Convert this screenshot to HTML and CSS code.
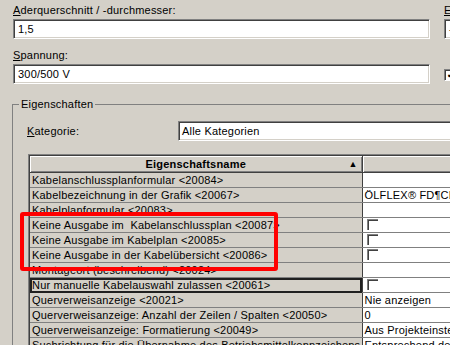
FILE: index.html
```html
<!DOCTYPE html>
<html lang="de">
<head>
    <meta charset="UTF-8">
    <title>Eigenschaften</title>
    <link rel="stylesheet" href="styles.css">
</head>
<body>
    <div class="top">
        <div class="fields">
            <label class="lbl"><u>A</u>derquerschnitt / -durchmesser:</label>
            <div class="edit">1,5</div>
            <label class="lbl second"><u>S</u>pannung:</label>
            <div class="edit">300/500 V</div>
        </div>
        <div class="side">
            <label class="lbl"><u>E</u></label>
            <div class="edit combo">-</div>
            <span class="check side-check">&#10004;</span>
        </div>
    </div>

    <fieldset class="group">
        <legend>Eigenschaften</legend>
        <div class="cat-row">
            <label class="cat-label"><u>K</u>ategorie:</label>
            <div class="edit select">Alle Kategorien</div>
        </div>
        <div class="grid-outer">
            <div class="grid-inner">
                <table class="props">
                    <colgroup><col class="c-name"><col class="c-value"></colgroup>
                    <thead>
                        <tr>
                            <th class="h-name">Eigenschaftsname<span class="sort">&#9650;</span></th>
                            <th class="h-value"></th>
                        </tr>
                    </thead>
                    <tbody>
                        <tr><td>Kabelanschlussplanformular &lt;20084&gt;</td><td></td></tr>
                        <tr><td>Kabelbezeichnung in der Grafik &lt;20067&gt;</td><td>ÖLFLEX® FD¶CLASSIC 810</td></tr>
                        <tr><td>Kabelplanformular &lt;20083&gt;</td><td></td></tr>
                        <tr><td>Keine Ausgabe im &nbsp;Kabelanschlussplan &lt;20087&gt;</td><td><span class="check"></span></td></tr>
                        <tr><td>Keine Ausgabe im Kabelplan &lt;20085&gt;</td><td><span class="check"></span></td></tr>
                        <tr><td>Keine Ausgabe in der Kabelübersicht &lt;20086&gt;</td><td><span class="check"></span></td></tr>
                        <tr><td>Montageort (beschreibend) &lt;20024&gt;</td><td></td></tr>
                        <tr class="selected"><td>Nur manuelle Kabelauswahl zulassen &lt;20061&gt;</td><td><span class="check"></span></td></tr>
                        <tr><td>Querverweisanzeige &lt;20021&gt;</td><td>Nie anzeigen</td></tr>
                        <tr><td>Querverweisanzeige: Anzahl der Zeilen / Spalten &lt;20050&gt;</td><td>0</td></tr>
                        <tr><td>Querverweisanzeige: Formatierung &lt;20049&gt;</td><td>Aus Projekteinstellungen</td></tr>
                        <tr><td>Suchrichtung für die Übernahme des Betriebsmittelkennzeichens</td><td>Entsprechend der Einstellung</td></tr>
                    </tbody>
                </table>
            </div>
        </div>
    </fieldset>

    <div class="mark"></div>
</body>
</html>
```

FILE: styles.css
```css
body {
    margin: 0;
    width: 450px;
    height: 345px;
    overflow: hidden;
    position: relative;
    background-color: #d4d0c8;
    font-family: "Liberation Sans", Arial, sans-serif;
    font-size: 11px;
    letter-spacing: 0.2px;
    color: #000;
}
.top {
    display: flex;
    gap: 14px;
    padding: 4px 0 0 13px;
}
.fields {
    width: 417px;
    flex: none;
}
.side {
    width: 40px;
    flex: none;
}
.lbl {
    display: block;
    height: 13px;
    line-height: 13px;
    margin-bottom: 2px;
}
.lbl.second {
    margin-top: 10px;
}
.edit {
    height: 20px;
    box-sizing: border-box;
    border: 1px solid;
    border-color: #808080 #fff #fff #808080;
    box-shadow: inset 1px 1px #404040, inset -1px -1px #d4d0c8;
    background-color: #fff;
    padding: 0 4px;
    line-height: 18px;
    white-space: nowrap;
    overflow: hidden;
}
.check {
    display: inline-block;
    width: 12px;
    height: 12px;
    box-sizing: border-box;
    border: 1px solid;
    border-color: #808080 #fff #fff #808080;
    box-shadow: inset 1px 1px #404040;
    background-color: #fff;
    vertical-align: top;
}
.side-check {
    margin-top: 30px;
    font-size: 9px;
    line-height: 10px;
    padding-left: 2px;
}
.group {
    margin: 14px 0 0 12px;
    padding: 0 0 0 14px;
    width: 500px;
    border: 1px solid #808080;
    border-right: none;
    border-bottom: none;
}
.group legend {
    margin-left: -8px;
    padding: 0 2px;
    line-height: 12px;
}
.cat-row {
    display: flex;
    margin-top: 11px;
    align-items: center;
}
.cat-label {
    width: 151px;
    flex: none;
}
.select {
    flex: 1;
    padding-left: 3px;
}
.grid-outer {
    margin: 13px 0 0 1px;
    border: 1px solid;
    border-color: #808080 #fff #fff #808080;
}
.grid-inner {
    border: 1px solid;
    border-color: #404040 #d4d0c8 #d4d0c8 #404040;
}
.props {
    border-collapse: collapse;
    table-layout: fixed;
    width: 480px;
}
.c-name {
    width: 332px;
}
.props th {
    height: 16px;
    padding: 0;
    font-weight: bold;
    background-color: #d4d0c8;
    border-right: 1px solid #404040;
    border-bottom: 1px solid #404040;
    box-shadow: inset 1px 1px #fff, inset -1px -1px #808080;
    position: relative;
}
.sort {
    position: absolute;
    right: 4px;
    top: 3px;
    font-size: 9px;
}
.props td {
    height: 14px;
    padding: 0 0 0 2px;
    line-height: 14px;
    border-bottom: 1px solid #808080;
    white-space: nowrap;
    overflow: hidden;
    background-color: #fff;
}
.props td:first-child {
    background-color: #d4d0c8;
    border-right: 1px solid #404040;
}
.props td .check {
    margin: 1px 0 0 2px;
    width: 11px;
    height: 11px;
    border-right: none;
    border-bottom: none;
}
.props tr.selected td:first-child {
    outline: 2px solid #202020;
    outline-offset: -2px;
}
.mark {
    position: absolute;
    left: 20px;
    top: 212px;
    width: 258px;
    height: 59px;
    box-sizing: border-box;
    border: 4px solid #ff0000;
    border-radius: 3px;
}
```
